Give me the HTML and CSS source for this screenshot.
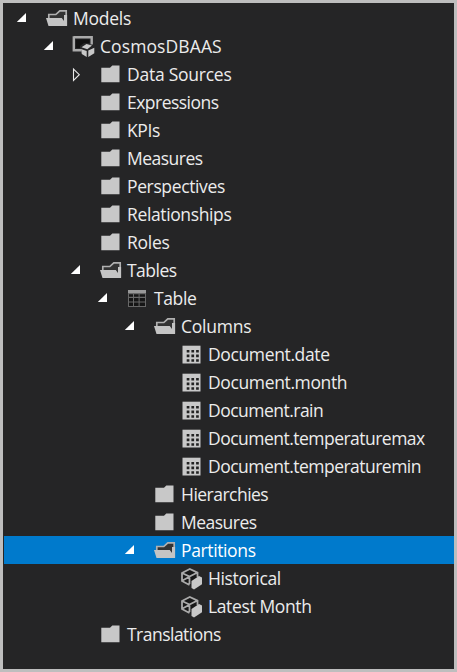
FILE: index.html
```html
<!DOCTYPE html>
<html lang="en">
<head>
<meta charset="utf-8">
<title>Tabular Model Explorer</title>
<link rel="stylesheet" href="styles.css">
</head>
<body>
<svg class="symbols" aria-hidden="true">
  <symbol id="expanded" viewBox="0 0 40 28"><path d="M22 9V18H12.8Z" fill="#fff"/></symbol>
  <symbol id="collapsed" viewBox="0 0 40 28"><path d="M15.5 9V20.5L21.3 14.7Z" fill="none" stroke="#e8e8e8" stroke-width="1.1"/></symbol>
  <symbol id="open" viewBox="0 0 25 28"><path d="M4.8 14V10.5H11.8L15.8 6.8H22.2V21" fill="#333" stroke="#b0b0b0" stroke-width="1.7"/><path d="M2 14H17.8L20 17V11H23.1V22H4.5Z" fill="#c4c4c4"/></symbol>
  <symbol id="closed" viewBox="0 0 25 28"><path d="M3.3 7.7H12L14.3 5.5H21.5V22.2H3.3Z" fill="#c8c8c8"/></symbol>
  <symbol id="table" viewBox="0 0 25 28"><path d="M3 6H21V23H3Z" fill="#686868"/><path d="M3 6H21V9H3Z" fill="#999"/><path d="M4 10.2h4v2.6H4zm5 0h4.6v2.6H9zm5.6 0h5.4v2.6h-5.4zM4 14h4v3.4H4zm5 0h4.6v3.4H9zm5.6 0h5.4v3.4h-5.4zM4 18.6h4v3.4H4zm5 0h4.6v3.4H9zm5.6 0h5.4v3.4h-5.4z" fill="#151515"/></symbol>
  <symbol id="column" viewBox="0 0 25 28"><path d="M3.5 5.7H21.5V23.5H3.5Z" fill="#c8c8c8"/><path d="M7.7 10h2.7v2.6H7.7zm4.7 0h2.7v2.6h-2.7zm4.7 0h2.7v2.6h-2.7zM7.7 14.6h2.7v2.6H7.7zm4.7 0h2.7v2.6h-2.7zm4.7 0h2.7v2.6h-2.7zM7.7 19.2h2.7v2.6H7.7zm4.7 0h2.7v2.6h-2.7zm4.7 0h2.7v2.6h-2.7z" fill="#222"/></symbol>
  <symbol id="model" viewBox="0 0 25 28"><path d="M2.8 5.3H20.7V12.5M2.8 4.2V18.2H10" fill="none" stroke="#aaa" stroke-width="2.4"/><path d="M5 7.5H18.5V11H13L9 14V16H5Z" fill="#111"/><path d="M10.5 15.2L15.5 12 21 13.5 16.3 17.2ZM10 17L15.7 19V25L10.8 22ZM17.3 18.6L23.3 15.8V21.2L17.3 25Z" fill="#c8c8c8"/></symbol>
  <symbol id="partition" viewBox="0 0 25 28"><path d="M10.5 5L18.5 9V13L11 20.5 3 17V9.2Z" fill="#181818"/><path d="M18.5 13V8.6L10.8 5 3 9V17L10.5 21M3.5 9.3L10.5 12.5 18 8.8M10.5 12.5V20M3.5 16.5L10 13" fill="none" stroke="#aaa" stroke-width="1.8"/><path d="M12.5 17L20 12 23 13.5V20.2L15 25.5 12.5 24Z" fill="#c8c8c8"/></symbol>
</svg>
<main class="tree" role="tree">
  <div class="row l0"><svg class="arrow"><use href="#expanded"/></svg><svg class="icon"><use href="#open"/></svg><span class="snug">Models</span></div>
  <div class="row l1"><svg class="arrow"><use href="#expanded"/></svg><svg class="icon"><use href="#model"/></svg><span class="wide">CosmosDBAAS</span></div>
  <div class="row l2"><svg class="arrow"><use href="#collapsed"/></svg><svg class="icon"><use href="#closed"/></svg><span class="snug">Data Sources</span></div>
  <div class="row l2"><i class="arrow"></i><svg class="icon"><use href="#closed"/></svg><span class="tight">Expressions</span></div>
  <div class="row l2"><i class="arrow"></i><svg class="icon"><use href="#closed"/></svg><span>KPIs</span></div>
  <div class="row l2"><i class="arrow"></i><svg class="icon"><use href="#closed"/></svg><span class="tight">Measures</span></div>
  <div class="row l2"><i class="arrow"></i><svg class="icon"><use href="#closed"/></svg><span>Perspectives</span></div>
  <div class="row l2"><i class="arrow"></i><svg class="icon"><use href="#closed"/></svg><span>Relationships</span></div>
  <div class="row l2"><i class="arrow"></i><svg class="icon"><use href="#closed"/></svg><span class="snug">Roles</span></div>
  <div class="row l2"><svg class="arrow"><use href="#expanded"/></svg><svg class="icon"><use href="#open"/></svg><span class="tight">Tables</span></div>
  <div class="row l3"><svg class="arrow"><use href="#expanded"/></svg><svg class="icon"><use href="#table"/></svg><span>Table</span></div>
  <div class="row l4"><svg class="arrow"><use href="#expanded"/></svg><svg class="icon"><use href="#open"/></svg><span class="snug">Columns</span></div>
  <div class="row l5"><i class="arrow"></i><svg class="icon"><use href="#column"/></svg><span>Document.date</span></div>
  <div class="row l5"><i class="arrow"></i><svg class="icon"><use href="#column"/></svg><span>Document.month</span></div>
  <div class="row l5"><i class="arrow"></i><svg class="icon"><use href="#column"/></svg><span class="tight">Document.rain</span></div>
  <div class="row l5"><i class="arrow"></i><svg class="icon"><use href="#column"/></svg><span class="tight">Document.temperaturemax</span></div>
  <div class="row l5"><i class="arrow"></i><svg class="icon"><use href="#column"/></svg><span class="tight">Document.temperaturemin</span></div>
  <div class="row l4"><i class="arrow"></i><svg class="icon"><use href="#closed"/></svg><span class="tight">Hierarchies</span></div>
  <div class="row l4"><i class="arrow"></i><svg class="icon"><use href="#closed"/></svg><span class="tight">Measures</span></div>
  <div class="row l4 selected"><svg class="arrow"><use href="#expanded"/></svg><svg class="icon"><use href="#open"/></svg><span>Partitions</span></div>
  <div class="row l5"><i class="arrow"></i><svg class="icon"><use href="#partition"/></svg><span>Historical</span></div>
  <div class="row l5"><i class="arrow"></i><svg class="icon"><use href="#partition"/></svg><span>Latest Month</span></div>
  <div class="row l2"><i class="arrow"></i><svg class="icon"><use href="#closed"/></svg><span class="tight">Translations</span></div>
</main>
</body>
</html>
```
FILE: styles.css
```css
* { box-sizing: border-box; }
body { margin: 0; }
.symbols { display: none; }
.tree {
  height: 672px;
  padding: 1px 0 0 1px;
  border: 3px solid #bebebe;
  background: #252526;
  color: #ececec;
  font: 400 17.5px/28px "Open Sans", "Noto Sans", sans-serif;
  overflow: hidden;
}
.row { display: flex; height: 28px; white-space: pre; }
.row span { margin-left: 4px; letter-spacing: -0.37px; }
.row .wide { letter-spacing: 0.1px; }
.row .snug { letter-spacing: -0.25px; }
.row .tight { letter-spacing: -0.52px; }
.arrow { flex: none; width: 40px; height: 28px; }
.icon { flex: none; width: 25px; height: 28px; }
.l1 { padding-left: 27px; }
.l2 { padding-left: 54px; }
.l3 { padding-left: 81px; }
.l4 { padding-left: 108px; }
.l5 { padding-left: 135px; }
.selected { background: #007acc; color: #fff; }
```
